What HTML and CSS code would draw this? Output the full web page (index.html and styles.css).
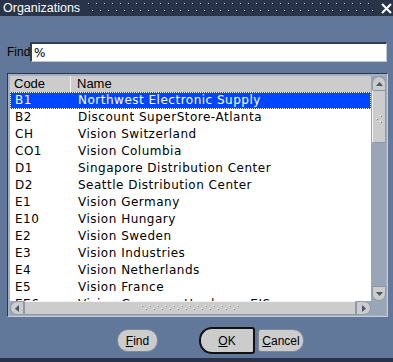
FILE: index.html
```html
<!DOCTYPE html>
<html lang="en">
<head>
  <meta charset="UTF-8">
  <title>Organizations</title>
  <link rel="stylesheet" href="styles.css">
</head>
<body>
  <div class="window">
    <div class="titlebar">
      <span class="title">Organizations</span>
      <svg class="title-grip" width="288" height="16">
        <defs>
          <pattern id="tdots" width="8" height="16" patternUnits="userSpaceOnUse">
            <rect x="0" y="3" width="1" height="1" fill="#c9d1dd"/>
            <rect x="1" y="4" width="1" height="1" fill="#0d121a"/>
            <rect x="4" y="10" width="1" height="1" fill="#c9d1dd"/>
            <rect x="5" y="11" width="1" height="1" fill="#0d121a"/>
          </pattern>
        </defs>
        <rect width="288" height="16" fill="url(#tdots)"/>
      </svg>
      <svg class="close" width="11" height="11" viewBox="0 0 11 11">
        <path d="M1 1L10 10M10 1L1 10" stroke="#fff" stroke-width="2"/>
      </svg>
    </div>

    <div class="content">
      <div class="find-row">
        <label class="find-label">Find</label>
        <input class="find-input" type="text" value="%">
      </div>

      <div class="list-frame">
        <div class="list-grid">
          <div class="list-view">
            <div class="head">
              <span class="h-code">Code</span>
              <span class="h-name">Name</span>
            </div>
            <div class="row selected"><span class="c-code">B1</span><span class="c-name">Northwest Electronic Supply</span></div>
            <div class="row"><span class="c-code">B2</span><span class="c-name">Discount SuperStore-Atlanta</span></div>
            <div class="row"><span class="c-code">CH</span><span class="c-name">Vision Switzerland</span></div>
            <div class="row"><span class="c-code">CO1</span><span class="c-name">Vision Columbia</span></div>
            <div class="row"><span class="c-code">D1</span><span class="c-name">Singapore Distribution Center</span></div>
            <div class="row"><span class="c-code">D2</span><span class="c-name">Seattle Distribution Center</span></div>
            <div class="row"><span class="c-code">E1</span><span class="c-name">Vision Germany</span></div>
            <div class="row"><span class="c-code">E10</span><span class="c-name">Vision Hungary</span></div>
            <div class="row"><span class="c-code">E2</span><span class="c-name">Vision Sweden</span></div>
            <div class="row"><span class="c-code">E3</span><span class="c-name">Vision Industries</span></div>
            <div class="row"><span class="c-code">E4</span><span class="c-name">Vision Netherlands</span></div>
            <div class="row"><span class="c-code">E5</span><span class="c-name">Vision France</span></div>
            <div class="row"><span class="c-code">EE6</span><span class="c-name">Vision Germany Hardware EIS</span></div>
          </div>

          <div class="vscroll">
            <div class="arrow up">
              <svg width="7" height="4"><path d="M0 4L3.5 0L7 4Z" fill="#4b5668"/></svg>
            </div>
            <div class="v-thumb">
              <svg width="8" height="9">
                <rect x="5" y="0" width="1" height="1" fill="#fff"/><rect x="6" y="1" width="1" height="1" fill="#777"/>
                <rect x="1" y="3" width="1" height="1" fill="#fff"/><rect x="2" y="4" width="1" height="1" fill="#777"/>
                <rect x="5" y="6" width="1" height="1" fill="#fff"/><rect x="6" y="7" width="1" height="1" fill="#777"/>
              </svg>
            </div>
            <div class="v-track"></div>
            <div class="arrow down">
              <svg width="7" height="4"><path d="M0 0L3.5 4L7 0Z" fill="#4b5668"/></svg>
            </div>
          </div>

          <div class="hscroll">
            <div class="arrow left">
              <svg width="4" height="7"><path d="M4 0L0 3.5L4 7Z" fill="#4b5668"/></svg>
            </div>
            <div class="h-thumb">
              <svg width="100" height="8">
                <defs>
                  <pattern id="hdots" width="8" height="8" patternUnits="userSpaceOnUse">
                    <rect x="0" y="1" width="1" height="1" fill="#f4f4f4"/>
                    <rect x="1" y="2" width="1" height="1" fill="#8a8a8a"/>
                    <rect x="4" y="4" width="1" height="1" fill="#f4f4f4"/>
                    <rect x="5" y="5" width="1" height="1" fill="#8a8a8a"/>
                  </pattern>
                </defs>
                <rect width="100" height="8" fill="url(#hdots)"/>
              </svg>
            </div>
            <div class="arrow right">
              <svg width="4" height="7"><path d="M0 0L4 3.5L0 7Z" fill="#4b5668"/></svg>
            </div>
          </div>
          <div class="corner"></div>
        </div>
      </div>

      <div class="buttons">
        <button class="btn btn-find"><u>F</u>ind</button>
        <button class="btn btn-ok"><u>O</u>K</button>
        <button class="btn btn-cancel"><u>C</u>ancel</button>
      </div>
    </div>
  </div>
</body>
</html>
```

FILE: styles.css
```css
* { box-sizing: border-box; }
body {
  margin: 0;
  background: #62789a;
  font-family: "Liberation Sans", Arial, sans-serif;
}
.window {
  width: 393px;
  height: 362px;
  background: #62789a;
  border-bottom: 4px solid #28334a;
}
.titlebar {
  height: 16px;
  background: #29344a;
  display: flex;
  align-items: center;
  color: #fff;
}
.title {
  font-size: 12.5px;
  padding-left: 3px;
  width: 88px;
  line-height: 16px;
}
.title-grip { display: block; }
.close {
  display: block;
  margin-left: 5px;
}
.content {
  padding: 0 5px 0 7px;
}
.find-row {
  display: flex;
  align-items: center;
  margin-top: 26px;
  height: 20px;
}
.find-label {
  width: 23px;
  color: #000;
  font-size: 12px;
}
.find-input {
  width: 357px;
  height: 20px;
  margin: 0;
  padding: 0 2px;
  border: 1px solid #c4c8ce;
  border-top: 2px solid #2f3d52;
  border-left: 2px solid #2f3d52;
  background: #fff;
  font-family: "DejaVu Sans", sans-serif;
  font-size: 12px;
  outline: none;
}
.list-frame {
  margin-top: 11px;
  width: 381px;
  border: 1px solid #c3ccd8;
  border-top-color: #2c384c;
  border-left-color: #2c384c;
  padding: 2px 1px 1px 2px;
  background: #a3afc0;
}
.list-grid {
  display: grid;
  grid-template-columns: 361px 15px;
  grid-template-rows: 225px 14px;
}
.list-view {
  background: #fff;
  overflow: hidden;
  font-family: "DejaVu Sans", sans-serif;
  font-size: 12px;
  letter-spacing: 0.5px;
}
.head {
  display: flex;
  height: 16px;
  background: #cccccc;
  font-family: "Liberation Sans", Arial, sans-serif;
  font-size: 13px;
  letter-spacing: 0;
  line-height: 16px;
}
.h-code {
  width: 61px;
  padding-left: 4px;
  border-right: 1px solid #f2f2f2;
}
.h-name { padding-left: 6px; }
.row {
  display: flex;
  height: 17px;
  line-height: 17px;
  color: #000;
  white-space: nowrap;
}
.c-code {
  width: 62px;
  padding-left: 5px;
}
.c-name { padding-left: 6px; }
.row.selected {
  background: #0046ff;
  color: #fff;
  outline: 1px dotted #fff;
  outline-offset: -1px;
}
.vscroll {
  display: flex;
  flex-direction: column;
  background: #98a6b8;
  padding-left: 1px;
}
.arrow {
  display: flex;
  align-items: center;
  justify-content: center;
  background: #cccccc;
  border: 1px solid #8f98a5;
}
.arrow svg { display: block; }
.arrow.up {
  height: 14px;
  border-radius: 7px 7px 0 0;
  border-bottom: none;
}
.arrow.down {
  height: 15px;
  margin-top: auto;
  border-radius: 0 0 7px 7px;
}
.v-thumb {
  height: 53px;
  background: #cccccc;
  border: 1px solid #8f98a5;
  border-left: 1px solid #f4f4f4;
  display: flex;
  align-items: center;
  justify-content: center;
  padding-top: 6px;
}
.hscroll {
  display: flex;
  background: #98a6b8;
}
.arrow.left {
  width: 14px;
  border-radius: 7px 0 0 7px;
}
.arrow.right {
  width: 15px;
  border-radius: 0 7px 7px 0;
}
.h-thumb {
  flex: 1;
  background: #cccccc;
  border: 1px solid #8f98a5;
  border-top: 1px solid #f4f4f4;
  display: flex;
  align-items: center;
  justify-content: center;
}
.h-thumb svg { display: block; margin-left: 2px; }
.corner { background: #98a6b8; }
.buttons {
  display: flex;
  align-items: center;
  margin-top: 10px;
  padding-left: 110px;
  height: 27px;
}
.btn {
  height: 23px;
  margin: 0;
  padding: 0;
  background: #cccccc;
  border: 1px solid #7e8896;
  font-family: "Liberation Sans", Arial, sans-serif;
  font-size: 12px;
  color: #000;
}
.btn-find {
  width: 41px;
  border-radius: 11px;
}
.btn-ok {
  width: 56px;
  height: 27px;
  margin-left: 41px;
  border: 2px solid #111;
  border-radius: 13px 3px 3px 13px;
}
.btn-cancel {
  width: 46px;
  margin-left: 3px;
  border-radius: 3px 11px 11px 3px;
}
```
